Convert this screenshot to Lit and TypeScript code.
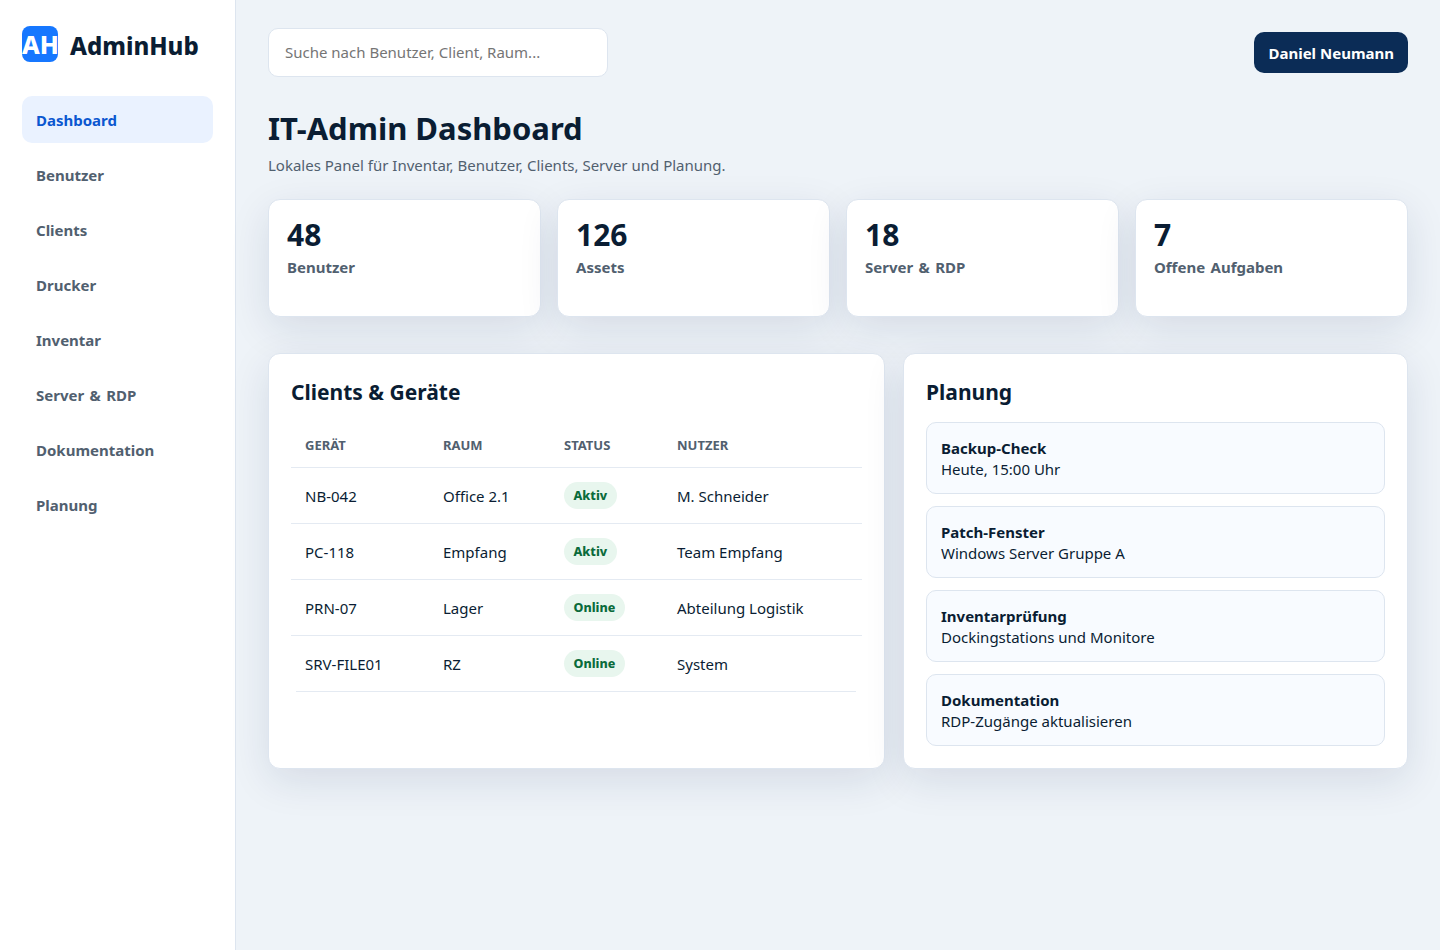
import { LitElement, html, css } from 'lit';
import { customElement } from 'lit/decorators.js';

const navItems = ["Dashboard", "Benutzer", "Clients", "Drucker", "Inventar", "Server & RDP", "Dokumentation", "Planung"];
const stats = [
    { value: "48", label: "Benutzer" },
    { value: "126", label: "Assets" },
    { value: "18", label: "Server & RDP" },
    { value: "7", label: "Offene Aufgaben" },
];
const devices = [
    { name: "NB-042", room: "Office 2.1", status: "Aktiv", user: "M. Schneider" },
    { name: "PC-118", room: "Empfang", status: "Aktiv", user: "Team Empfang" },
    { name: "PRN-07", room: "Lager", status: "Online", user: "Abteilung Logistik" },
    { name: "SRV-FILE01", room: "RZ", status: "Online", user: "System" },
];
const plans = [
    { title: "Backup-Check", text: "Heute, 15:00 Uhr" },
    { title: "Patch-Fenster", text: "Windows Server Gruppe A" },
    { title: "Inventarprüfung", text: "Dockingstations und Monitore" },
    { title: "Dokumentation", text: "RDP-Zugänge aktualisieren" },
];

@customElement("app-root")
class AppRoot extends LitElement {
    static styles = css`
    :host {
        display: block;
        font-family: "Noto Sans", sans-serif;
        color: #0a1d33;
    }
    .layout {
        display: grid;
        grid-template-columns: 236px 1fr;
        min-height: 950px;
        background: #eef3f8;
    }
    .sidebar {
        background: #fff;
        border-right: 1px solid #dde5ef;
        padding: 26px 22px;
    }
    .brand {
        display: flex;
        align-items: flex-start;
        gap: 12px;
        margin-bottom: 30px;
    }
    .logo {
        width: 36px;
        height: 36px;
        border-radius: 8px;
        background: #1677ff;
        color: #fff;
        font-weight: 800;
        font-size: 25px;
        line-height: 37px;
        overflow: hidden;
        white-space: nowrap;
    }
    .brand-name {
        font-size: 24px;
        font-weight: 800;
        line-height: 40px;
    }
    nav {
        display: flex;
        flex-direction: column;
        gap: 8px;
    }
    nav a {
        display: block;
        height: 47px;
        line-height: 49px;
        padding: 0 14px;
        border-radius: 10px;
        font-size: 15px;
        font-weight: 700;
        word-spacing: 1.5px;
        color: #51606f;
    }
    nav a.active {
        background: #eaf2ff;
        color: #0b57d0;
    }
    main {
        padding: 28px 32px;
    }
    .topbar {
        display: flex;
        justify-content: space-between;
        align-items: center;
        margin-bottom: 29px;
    }
    .search {
        width: 340px;
        height: 49px;
        box-sizing: border-box;
        background: #fff;
        border: 1px solid #dde5ef;
        border-radius: 10px;
        padding: 0 16px;
        font-size: 15px;
        line-height: 47px;
        color: #757575;
    }
    .user {
        background: #0b2c56;
        color: #fff;
        font-size: 15px;
        font-weight: 700;
        height: 41px;
        line-height: 42px;
        padding: 0 14px;
        border-radius: 10px;
    }
    h1 {
        margin: 0;
        font-size: 31px;
        line-height: 44px;
        font-weight: 700;
    }
    .sub {
        margin: 5px 0 24px;
        font-size: 15px;
        line-height: 20px;
        color: #51606f;
    }
    .stats {
        display: grid;
        grid-template-columns: repeat(4, 1fr);
        gap: 16px;
        margin-bottom: 36px;
    }
    .card {
        background: #fff;
        border: 1px solid #dde5ef;
        border-radius: 12px;
        box-shadow: 0 12px 40px rgba(15, 40, 80, 0.11);
        box-sizing: border-box;
    }
    .stat {
        height: 118px;
        padding: 18px;
    }
    .stat-value {
        font-size: 30px;
        line-height: 33px;
        font-weight: 700;
    }
    .stat-label {
        margin-top: 6px;
        font-size: 15px;
        line-height: 20px;
        font-weight: 700;
        word-spacing: 1.5px;
        color: #51606f;
    }
    .panels {
        display: grid;
        grid-template-columns: 617px 505px;
        gap: 18px;
    }
    .panel {
        height: 416px;
        padding: 22px;
    }
    h2 {
        margin: 0 0 14px;
        font-size: 21px;
        line-height: 32px;
        font-weight: 700;
    }
    table {
        width: 100%;
        table-layout: fixed;
        border-collapse: collapse;
        font-size: 15px;
    }
    th {
        text-align: left;
        font-size: 13px;
        font-weight: 700;
        color: #51606f;
        text-transform: uppercase;
        padding: 0 14px;
        height: 45px;
        border-bottom: 1px solid #e4eaf2;
    }
    td {
        height: 55px;
        padding: 0 14px;
        border-bottom: 1px solid #e4eaf2;
    }
    tbody tr:last-child td {
        border-bottom: none;
    }
    .rule {
        height: 1px;
        margin: 0 6px 0 5px;
        background: #e4eaf2;
    }
    .badge {
        display: inline-block;
        padding: 0 9.5px;
        line-height: 27px;
        border-radius: 14px;
        background: #e8f6ee;
        color: #0a6b3b;
        font-size: 12.5px;
        font-weight: 800;
    }
    .plans {
        display: flex;
        flex-direction: column;
        gap: 12px;
    }
    .plan {
        height: 72px;
        box-sizing: border-box;
        padding: 15px 14px;
        background: #f8fbff;
        border: 1px solid #dde5ef;
        border-radius: 10px;
        font-size: 15px;
        line-height: 21px;
    }
    .plan strong {
        display: block;
        font-weight: 700;
    }
    `;
    render() {
        return html`
        <div class="layout">
            <aside class="sidebar">
                <div class="brand">
                    <div class="logo">AH</div>
                    <div class="brand-name">AdminHub</div>
                </div>
                <nav>
                    ${navItems.map((n, i) => html`<a class=${i === 0 ? "active" : ""}>${n}</a>`)}
                </nav>
            </aside>
            <main>
                <div class="topbar">
                    <div class="search">Suche nach Benutzer, Client, Raum...</div>
                    <div class="user">Daniel Neumann</div>
                </div>
                <h1>IT-Admin Dashboard</h1>
                <p class="sub">Lokales Panel für Inventar, Benutzer, Clients, Server und Planung.</p>
                <section class="stats">
                    ${stats.map(s => html`
                    <div class="card stat">
                        <div class="stat-value">${s.value}</div>
                        <div class="stat-label">${s.label}</div>
                    </div>`)}
                </section>
                <section class="panels">
                    <div class="card panel">
                        <h2>Clients &amp; Geräte</h2>
                        <table>
                            <colgroup>
                                <col style="width:138px"><col style="width:121px"><col style="width:113px"><col>
                            </colgroup>
                            <thead><tr><th>Gerät</th><th>Raum</th><th>Status</th><th>Nutzer</th></tr></thead>
                            <tbody>
                                ${devices.map(d => html`
                                <tr>
                                    <td>${d.name}</td>
                                    <td>${d.room}</td>
                                    <td><span class="badge">${d.status}</span></td>
                                    <td>${d.user}</td>
                                </tr>`)}
                            </tbody>
                        </table>
                        <div class="rule"></div>
                    </div>
                    <div class="card panel">
                        <h2>Planung</h2>
                        <div class="plans">
                            ${plans.map(p => html`
                            <div class="plan"><strong>${p.title}</strong>${p.text}</div>`)}
                        </div>
                    </div>
                </section>
            </main>
        </div>
        `;
    }
}
